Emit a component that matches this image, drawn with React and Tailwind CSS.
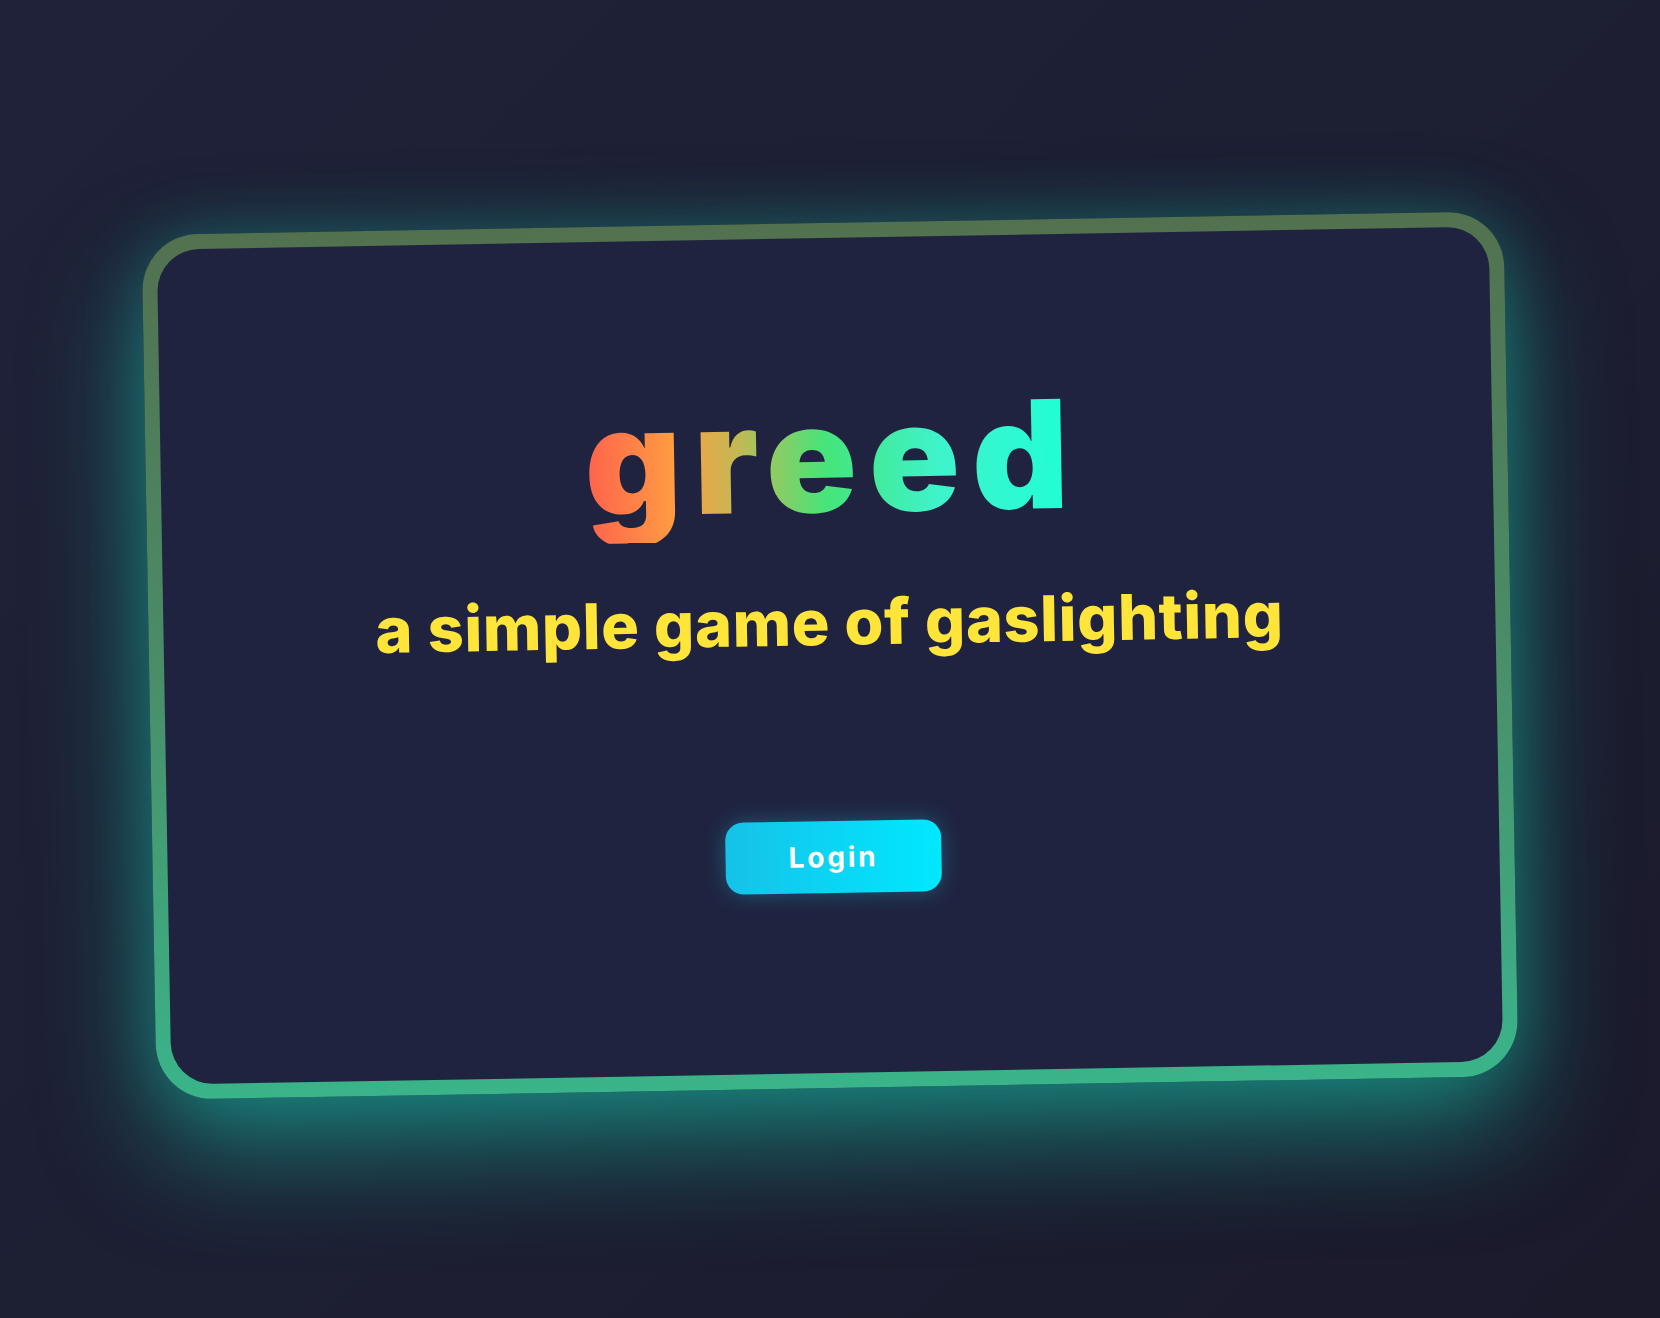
export default function App() {
    return (
        <div className="min-h-screen w-full flex items-center justify-center bg-[linear-gradient(135deg,#1f2239_0%,#1d1f33_50%,#1a1a2b_100%)] overflow-hidden" style={{ fontFamily: 'Inter, "Noto Sans", sans-serif' }}>
            {/* card: gradient border via padding */}
            <div className="-rotate-1 mb-[8px] w-[1362px] h-[865px] rounded-[56px] p-[15px] bg-[linear-gradient(180deg,#52714f_0%,#4a8d68_50%,#3ab48a_100%)] shadow-[0_50px_110px_rgba(24,176,156,0.62),0_0_60px_rgba(22,170,150,0.3)]">
                <div className="w-full h-full rounded-[42px] bg-[#1f2340] flex flex-col items-center pt-[137px]">
                    <h1 className="text-[150px] leading-[1.1] font-black tracking-[0.08em] pl-[0.08em] text-transparent bg-clip-text bg-[linear-gradient(90deg,#ff5a4e_0%,#ff9c42_20%,#c6b852_32%,#45e57a_50%,#3ff3cb_72%,#1effd6_100%)]">
                        greed
                    </h1>
                    <p className="mt-[51px] text-[63px] leading-none font-extrabold text-[#ffe43a] tracking-[0.01em]">
                        a simple game of gaslighting
                    </p>
                    <button className="mt-[167px] w-[216px] h-[72px] rounded-[18px] bg-[linear-gradient(90deg,#16c2e8_0%,#00e8ff_100%)] text-white text-[28px] font-bold tracking-[0.1em] shadow-[0_0_22px_rgba(34,211,238,0.3)]">
                        Login
                    </button>
                </div>
            </div>
        </div>
    );
}
